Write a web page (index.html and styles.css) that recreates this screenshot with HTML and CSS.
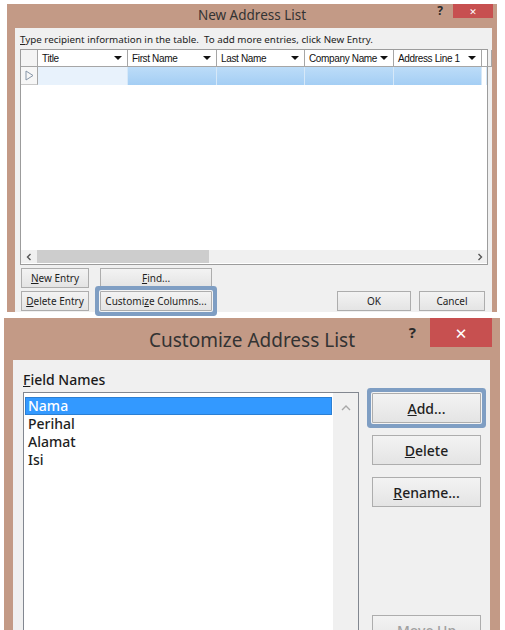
FILE: index.html
```html
<!DOCTYPE html>
<html>

<head>
    <title>New Address List / Customize Address List</title>
    <link rel="stylesheet" href="styles.css">
</head>

<body>
    <!-- first dialog: the address list table -->
    <div class="shot shot-a">
        <div class="titlebar">
            <span class="title">New Address List</span>
            <div class="controls">
                <span class="help">?</span>
                <span class="close">&#x2715;</span>
            </div>
        </div>

        <div class="client">
            <p class="hint"><u>T</u>ype recipient information in the table.&nbsp; To add more entries, click New Entry.</p>

            <div class="grid">
                <div class="grid-head">
                    <div class="cell corner"></div>
                    <div class="cell">Title<i class="drop"></i></div>
                    <div class="cell">First Name<i class="drop"></i></div>
                    <div class="cell">Last Name<i class="drop"></i></div>
                    <div class="cell">Company Name<i class="drop"></i></div>
                    <div class="cell">Address Line 1<i class="drop"></i></div>
                    <div class="cell"></div>
                </div>
                <div class="grid-row">
                    <div class="cell rowhead">
                        <svg width="9" height="11" viewBox="0 0 9 11"><path d="M1 1 L8 5.5 L1 10 Z" fill="none" stroke="#8796a8" stroke-width="1"/></svg>
                    </div>
                    <div class="cell first"></div>
                    <div class="cell sel"></div>
                    <div class="cell sel"></div>
                    <div class="cell sel"></div>
                    <div class="cell sel"></div>
                    <div class="cell"></div>
                </div>
                <div class="grid-body"></div>
                <div class="hscroll">
                    <span class="arrow">
                        <svg width="6" height="8" viewBox="0 0 6 8"><path d="M4.5 1 L1.5 4 L4.5 7" fill="none" stroke="#555" stroke-width="1.4"/></svg>
                    </span>
                    <div class="track"><div class="thumb"></div></div>
                    <span class="arrow">
                        <svg width="6" height="8" viewBox="0 0 6 8"><path d="M1.5 1 L4.5 4 L1.5 7" fill="none" stroke="#555" stroke-width="1.4"/></svg>
                    </span>
                </div>
            </div>

            <div class="actions">
                <div class="action-row">
                    <button class="btn w-small"><u>N</u>ew Entry</button>
                    <button class="btn w-wide"><u>F</u>ind...</button>
                </div>
                <div class="action-row">
                    <button class="btn w-small"><u>D</u>elete Entry</button>
                    <button class="btn w-wide focus">Customi<u>z</u>e Columns...</button>
                    <span class="spacer"></span>
                    <button class="btn w-ok">OK</button>
                    <button class="btn w-cancel">Cancel</button>
                </div>
            </div>
        </div>
    </div>

    <!-- second dialog: the field names -->
    <div class="shot shot-b">
        <div class="titlebar">
            <span class="title">Customize Address List</span>
            <div class="controls">
                <span class="help">?</span>
                <span class="close">&#x2715;</span>
            </div>
        </div>

        <div class="client">
            <div class="fields">
                <div class="field-col">
                    <label class="field-label"><u>F</u>ield Names</label>
                    <div class="listbox">
                        <ul class="items">
                            <li class="picked">Nama</li>
                            <li>Perihal</li>
                            <li>Alamat</li>
                            <li>Isi</li>
                        </ul>
                        <div class="vscroll">
                            <svg width="10" height="6" viewBox="0 0 10 6"><path d="M1 5 L5 1 L9 5" fill="none" stroke="#a8a8a8" stroke-width="1.4"/></svg>
                        </div>
                    </div>
                </div>

                <div class="btn-col">
                    <button class="btn big focus"><u>A</u>dd...</button>
                    <button class="btn big"><u>D</u>elete</button>
                    <button class="btn big"><u>R</u>ename...</button>
                    <button class="btn big off">Move <u>U</u>p</button>
                </div>
            </div>
        </div>
    </div>
</body>

</html>
```

FILE: styles.css
```css
* {
    box-sizing: border-box;
}

body {
    margin: 0;
    width: 505px;
    height: 630px;
    overflow: hidden;
    background: #fff;
    font-family: "Noto Sans", "DejaVu Sans", sans-serif;
    color: #1e1e1e;
}

u {
    text-decoration: underline;
    text-underline-offset: 1px;
}

.shot {
    background: #c39a86;
    display: flex;
    flex-direction: column;
}

.titlebar {
    display: grid;
    grid-template-columns: 1fr auto 1fr;
    align-items: start;
}

.title {
    grid-column: 2;
    color: #333;
    white-space: nowrap;
}

.controls {
    grid-column: 3;
    justify-self: end;
    display: flex;
    align-items: start;
}

.help {
    font-weight: bold;
    color: #2a2a2a;
}

.close {
    background: #c75050;
    color: #fff;
    font-weight: bold;
    display: flex;
    align-items: center;
    justify-content: center;
}

.client {
    flex: 1;
    background: #f0f0f0;
}

/* buttons */

.btn {
    font-family: inherit;
    color: #1e1e1e;
    background: linear-gradient(#f3f3f3, #e4e4e4);
    border: 1px solid #adadad;
    padding: 0;
}

.btn.focus {
    box-shadow: 0 0 0 1px #f4f4f4, 0 0 0 5px #7f9ec3;
    border-radius: 1px;
}

/* ---------- first dialog ---------- */

.shot-a {
    margin: 4px 8px 0 7px;
    height: 308px;
}

.shot-a .titlebar {
    height: 24px;
}

.shot-a .title {
    font-size: 13.5px;
    line-height: 22px;
}

.shot-a .help {
    font-size: 12px;
    line-height: 12px;
    margin: 1px 10px 0 0;
}

.shot-a .close {
    width: 40px;
    height: 14px;
    margin-right: 4px;
    font-size: 9px;
}

.shot-a .client {
    margin: 0 5px 0 8px;
    padding: 5px 4px 0 5px;
}

.hint {
    margin: 0;
    font-size: 9.8px;
    line-height: 14px;
    color: #222;
}

.grid {
    margin-top: 2px;
    height: 216px;
    border: 1px solid #9c9c9c;
    background: #fff;
    display: flex;
    flex-direction: column;
}

.grid-head,
.grid-row {
    display: grid;
    grid-template-columns: 17px 90px 89px 88px 89px 88px 1fr;
}

.grid-head {
    height: 17px;
}

.grid-head .cell {
    border-right: 1px solid #a6a6a6;
    border-bottom: 1px solid #a6a6a6;
    padding: 0 5px 0 4px;
    display: flex;
    align-items: center;
    justify-content: space-between;
    font-family: "Liberation Sans", Arial, sans-serif;
    font-size: 10px;
    letter-spacing: -0.35px;
    color: #111;
    white-space: nowrap;
}

.grid-head .corner {
    background: #f4f4f4;
}

.drop {
    flex: none;
    width: 0;
    height: 0;
    border-left: 4px solid transparent;
    border-right: 4px solid transparent;
    border-top: 4px solid #111;
}

.grid-row {
    height: 18px;
}

.grid-row .cell {
    border-right: 1px solid #d6e8f8;
}

.grid-row .rowhead {
    background: #f6f6f6;
    border-right: 1px solid #a6a6a6;
    border-bottom: 1px solid #c8c8c8;
    display: flex;
    align-items: center;
    justify-content: center;
}

.grid-row .first {
    background: #e8f2fc;
}

.grid-row .sel {
    background: linear-gradient(#bcdcf8, #a4cef4);
}

.grid-body {
    flex: 1;
}

.hscroll {
    height: 13px;
    display: grid;
    grid-template-columns: 15px 1fr 15px;
    background: #f0f0f0;
    margin-bottom: 1px;
}

.arrow {
    display: flex;
    align-items: center;
    justify-content: center;
}

.track {
    padding: 0 0 0 1px;
}

.thumb {
    width: 172px;
    height: 100%;
    background: #cdcdcd;
}

.actions {
    margin-top: 3px;
    display: flex;
    flex-direction: column;
    gap: 3px;
    padding: 0 3px 0 1px;
}

.action-row {
    display: flex;
    gap: 11px;
}

.shot-a .btn {
    height: 20px;
    font-size: 10px;
}

.spacer {
    flex: 1;
}

.w-small {
    width: 68px;
}

.w-wide {
    width: 112px;
}

.w-ok {
    width: 74px;
    margin-right: -3px;
}

.w-cancel {
    width: 66px;
}

/* ---------- second dialog ---------- */

.shot-b {
    margin: 6px 5px 0 4px;
    height: 312px;
}

.shot-b .titlebar {
    height: 42px;
}

.shot-b .title {
    font-size: 19px;
    line-height: 44px;
}

.shot-b .help {
    font-size: 15px;
    line-height: 15px;
    margin: 7px 14px 0 0;
}

.shot-b .close {
    width: 62px;
    height: 29px;
    margin-right: 8px;
    font-size: 15px;
}

.shot-b .client {
    margin: 0 10px 0 9px;
    padding: 11px 9px 0 10px;
}

.fields {
    display: flex;
    gap: 13px;
    height: 100%;
}

.field-col {
    width: 336px;
    display: flex;
    flex-direction: column;
}

.field-label {
    font-size: 14px;
    font-weight: 500;
    line-height: 18px;
    color: #1a1a1a;
}

.listbox {
    margin-top: 3px;
    flex: 1;
    border: 1px solid #828790;
    background: #fff;
    display: flex;
}

.items {
    list-style: none;
    margin: 0;
    padding: 4px 1px 0 1px;
    flex: 1;
    font-size: 14px;
    font-weight: 500;
    line-height: 18px;
}

.items li {
    padding-left: 3px;
}

.items .picked {
    background: #3399ff;
    color: #fff;
    border: 1px solid #2b7fd3;
    line-height: 16px;
    padding-left: 2px;
}

.vscroll {
    width: 25px;
    background: #f0f0f0;
    display: flex;
    justify-content: center;
    align-items: flex-start;
    padding-top: 12px;
}

.btn-col {
    width: 109px;
    padding-top: 22px;
    display: flex;
    flex-direction: column;
    gap: 12px;
}

.btn.big {
    height: 30px;
    font-size: 14px;
    font-weight: 500;
}

.btn.off {
    margin-top: 96px;
    color: #a0a0a0;
}
```
